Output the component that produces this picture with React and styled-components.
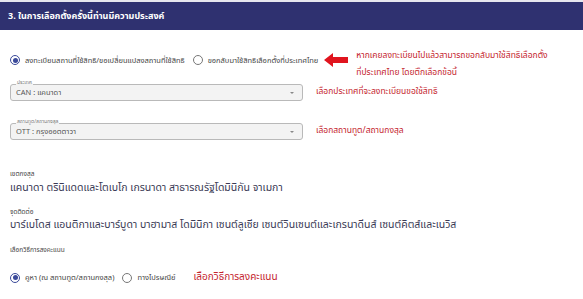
import React from "react";
import styled, { createGlobalStyle } from "styled-components";

const Global = createGlobalStyle`
  html, body { margin: 0; padding: 0; background: #fff; }
  body { font-family: "Noto Sans Thai", "Noto Sans", "DejaVu Sans", sans-serif; color: #333; }
  * { box-sizing: border-box; }
`;

const Page = styled.div`
  width: 583px;
  height: 299px;
  overflow: hidden;
  background: #fff;
  border-top: 2px solid #e6e6ee;
`;

const Header = styled.div`
  height: 28px;
  background: #2f3170;
  color: #fff;
  font-size: 9px;
  font-weight: 700;
  display: flex;
  align-items: center;
  padding-left: 8px;
`;

const Body = styled.div`
  padding: 0 0 0 10px;
  display: flex;
  flex-direction: column;
`;

const Row = styled.div`
  display: flex;
  align-items: center;
  margin-top: ${(p) => p.$mt || 0}px;
`;

const RadioGroup = styled.div`
  display: flex;
  align-items: center;
  gap: ${(p) => p.$gap || 8}px;
`;

const RadioItem = styled.label`
  display: flex;
  align-items: center;
  gap: 5px;
  font-size: 7.5px;
  color: #444;
`;

const RadioCircle = styled.span`
  width: 10px;
  height: 10px;
  border-radius: 50%;
  border: 1px solid ${(p) => (p.$on ? "#3b4a9a" : "#777")};
  display: flex;
  align-items: center;
  justify-content: center;
  &::after {
    content: "";
    width: 5px;
    height: 5px;
    border-radius: 50%;
    background: ${(p) => (p.$on ? "#3b4a9a" : "transparent")};
  }
`;

const Note = styled.div`
  color: #c4242e;
  font-size: ${(p) => p.$size || 8.5}px;
  line-height: ${(p) => p.$lh || 1.5};
  margin-left: ${(p) => p.$ml || 0}px;
  margin-top: ${(p) => p.$mt || 0}px;
`;

const Arrow = styled.svg`
  margin-left: 6px;
  flex: none;
`;

const Select = styled.div`
  position: relative;
  width: 293px;
  height: 17px;
  border: 1px solid #b9b9b9;
  border-radius: 3px;
  background: #f3f3f3;
  display: flex;
  align-items: center;
  padding: 0 8px 0 5px;
  font-size: 7.5px;
  font-weight: 400;
  color: #555;
  flex: none;
`;

const SelectLabel = styled.span`
  position: absolute;
  top: -5px;
  left: 5px;
  font-size: 5px;
  color: #777;
  background: linear-gradient(#fff 55%, #f3f3f3 55%);
  padding: 0 1px;
  line-height: 1.2;
`;

const Caret = styled.span`
  margin-left: auto;
  width: 0;
  height: 0;
  border-left: 2px solid transparent;
  border-right: 2px solid transparent;
  border-top: 2.5px solid #888;
`;

const FieldLabel = styled.div`
  font-size: 6.5px;
  color: #444;
  margin-top: ${(p) => p.$mt || 0}px;
`;

const FieldValue = styled.div`
  font-size: 10.5px;
  color: #3a3a55;
  margin-top: ${(p) => p.$mt || 0}px;
`;

export default function App() {
  return (
    <>
      <Global />
      <Page>
        <Header>3. ในการเลือกตั้งครั้งนี้ท่านมีความประสงค์</Header>
        <Body>
          <Row $mt={9.5}>
            <RadioGroup $gap={8}>
              <RadioItem>
                <RadioCircle $on />
                ลงทะเบียนสถานที่ใช้สิทธิ/ขอเปลี่ยนแปลงสถานที่ใช้สิทธิ
              </RadioItem>
              <RadioItem>
                <RadioCircle />
                ขอกลับมาใช้สิทธิเลือกตั้งที่ประเทศไทย
              </RadioItem>
            </RadioGroup>
            <Arrow width="24" height="14" viewBox="0 0 24 14">
              <polygon points="0,7 9,0 9,4 24,4 24,10 9,10 9,14" fill="#e0141e" />
            </Arrow>
            <Note $ml={8} $lh={2} $mt={7}>
              หากเคยลงทะเบียนไปแล้วสามารถขอกลับมาใช้สิทธิเลือกตั้ง
              <br />
              ที่ประเทศไทย โดยติ๊กเลือกข้อนี้
            </Note>
          </Row>
          <Row $mt={3.5}>
            <Select>
              <SelectLabel>ประเทศ</SelectLabel>
              CAN : แคนาดา
              <Caret />
            </Select>
            <Note $ml={13}>เลือกประเทศที่จะลงทะเบียนขอใช้สิทธิ</Note>
          </Row>
          <Row $mt={22}>
            <Select>
              <SelectLabel>สถานทูต/สถานกงสุล</SelectLabel>
              OTT : กรุงออตตาวา
              <Caret />
            </Select>
            <Note $ml={13}>เลือกสถานทูต/สถานกงสุล</Note>
          </Row>
          <FieldLabel $mt={29}>เขตกงสุล</FieldLabel>
          <FieldValue $mt={1}>แคนาดา ตรินิแดดและโตเบโก เกรนาดา สาธารณรัฐโดมินิกัน จาเมกา</FieldValue>
          <FieldLabel $mt={11}>จุดติดต่อ</FieldLabel>
          <FieldValue $mt={0}>
            บาร์เบโดส แอนติกาและบาร์บูดา บาฮามาส โดมินิกา เซนต์ลูเซีย เซนต์วินเซนต์และเกรนาดีนส์ เซนต์คิตส์และเนวิส
          </FieldValue>
          <FieldLabel $mt={12}>เลือกวิธีการลงคะแนน</FieldLabel>
          <Row $mt={15}>
            <RadioGroup $gap={8}>
              <RadioItem>
                <RadioCircle $on />
                คูหา (ณ สถานทูต/สถานกงสุล)
              </RadioItem>
              <RadioItem>
                <RadioCircle />
                ทางไปรษณีย์
              </RadioItem>
            </RadioGroup>
            <Note $ml={18} $size={10}>เลือกวิธีการลงคะแนน</Note>
          </Row>
        </Body>
      </Page>
    </>
  );
}
